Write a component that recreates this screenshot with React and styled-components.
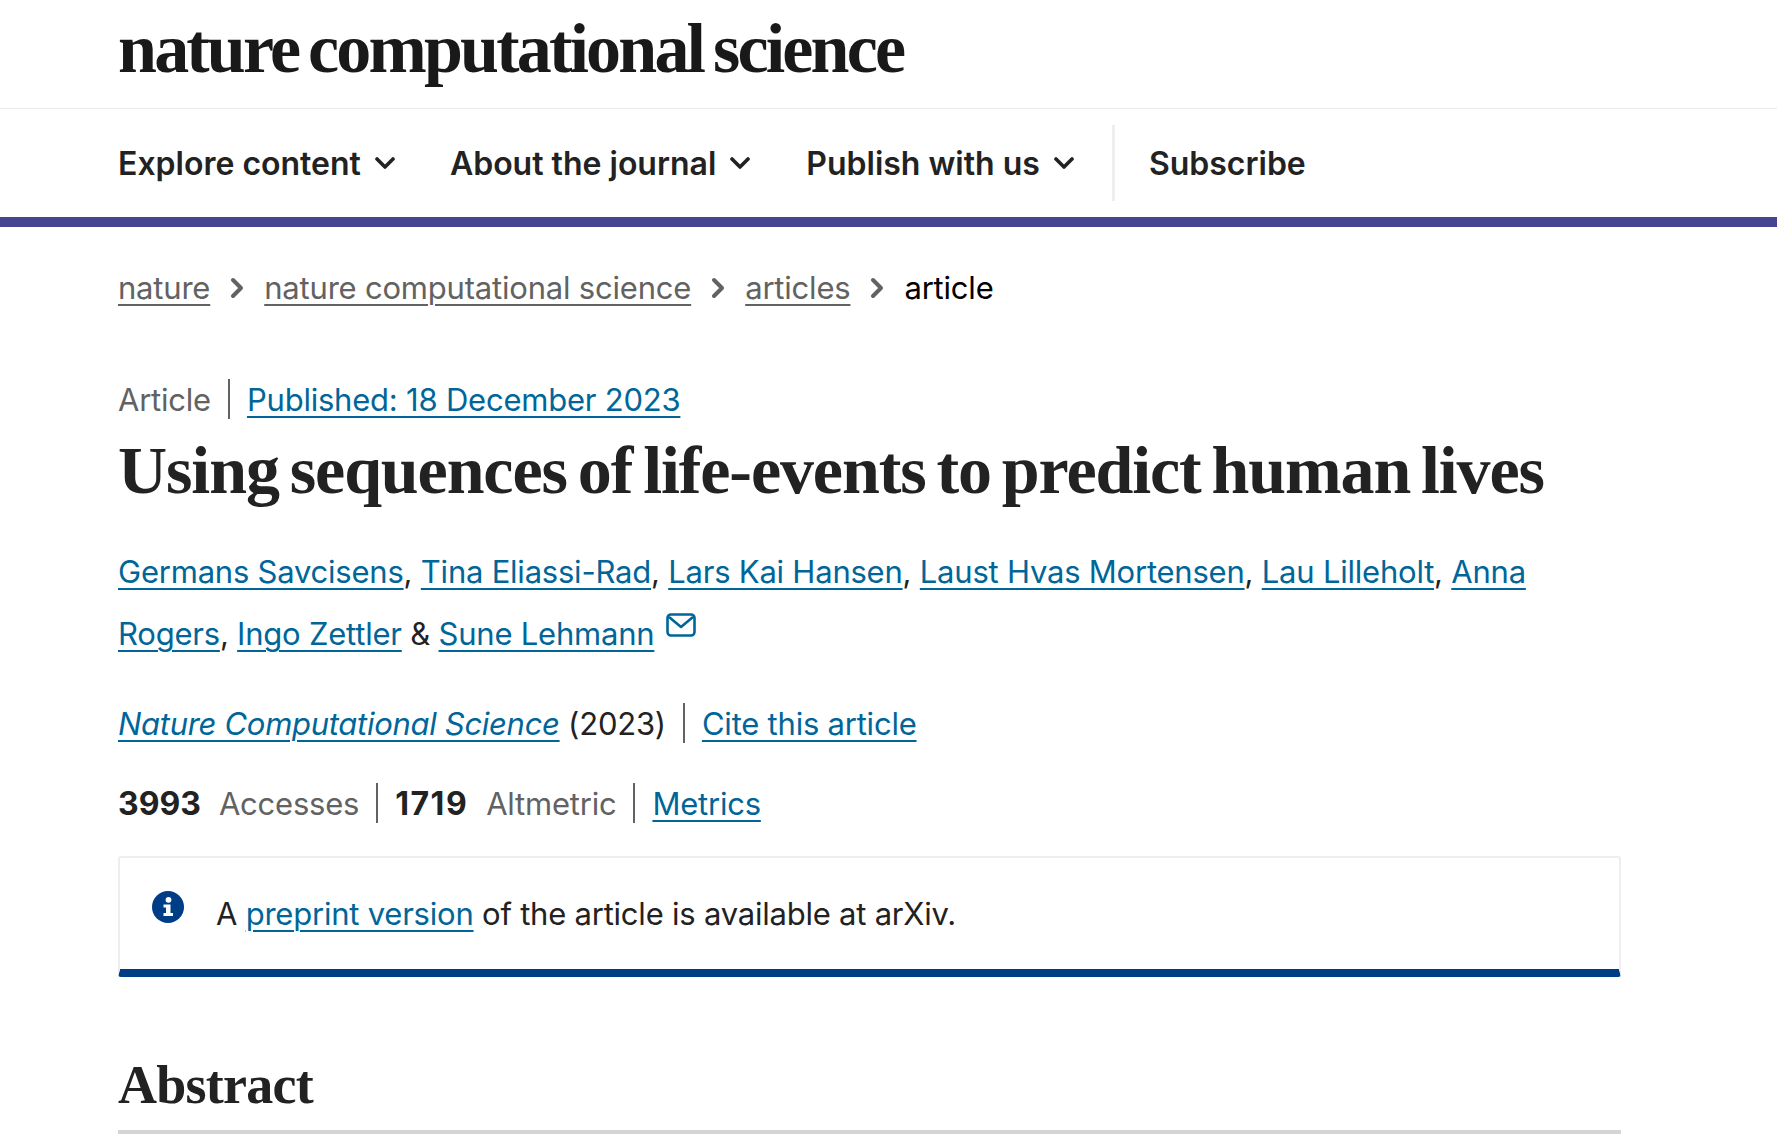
import styled, { createGlobalStyle } from "styled-components";

const GlobalStyle = createGlobalStyle`
  html, body {
    margin: 0;
    padding: 0;
    background: #fff;
    overflow: hidden;
  }
  body {
    font-family: Inter, "Liberation Sans", sans-serif;
    color: #222;
  }
`;

const authors = ["Germans Savcisens", "Tina Eliassi-Rad", "Lars Kai Hansen", "Laust Hvas Mortensen", "Lau Lilleholt"];

const Chevron = () => (
  <svg width="20" height="14" viewBox="0 0 20 14" fill="none">
    <path d="M2 3L10 11L18 3" stroke="#222" strokeWidth="3.6" strokeLinecap="round" strokeLinejoin="round" />
  </svg>
);

const CrumbArrow = () => (
  <svg width="14" height="22" viewBox="0 0 14 22" fill="none">
    <path d="M3 3L11 11L3 19" stroke="#626262" strokeWidth="4" strokeLinecap="round" strokeLinejoin="round" />
  </svg>
);

const App = () => {
  return (
    <>
      <GlobalStyle />
      <Masthead>
        <Logo>nature computational science</Logo>
      </Masthead>
      <Nav>
        <NavItem>
          Explore content <Chevron />
        </NavItem>
        <NavItem>
          About the journal <Chevron />
        </NavItem>
        <NavItem>
          Publish with us <Chevron />
        </NavItem>
        <NavDivider />
        <NavItem>Subscribe</NavItem>
      </Nav>
      <Main>
        <Breadcrumbs>
          <CrumbLink href="#">nature</CrumbLink>
          <CrumbArrow />
          <CrumbLink href="#">nature computational science</CrumbLink>
          <CrumbArrow />
          <CrumbLink href="#">articles</CrumbLink>
          <CrumbArrow />
          <span>article</span>
        </Breadcrumbs>

        <MetaRow $top={72}>
          <Muted>Article</Muted>
          <Sep />
          <BlueLink href="#">Published: 18 December 2023</BlueLink>
        </MetaRow>

        <Title>Using sequences of life-events to predict human lives</Title>

        <Authors>
          {authors.map((name) => (
            <span key={name}>
              <BlueLink href="#">{name}</BlueLink>,{" "}
            </span>
          ))}
          <BlueLink href="#">Anna Rogers</BlueLink>, <BlueLink href="#">Ingo Zettler</BlueLink> &amp;{" "}
          <BlueLink href="#">Sune Lehmann</BlueLink>
          <Envelope width="30" height="24" viewBox="0 0 30 24" fill="none">
            <rect x="1.5" y="1.5" width="27" height="21" rx="3.5" stroke="#069" strokeWidth="2.6" />
            <path d="M3 4L15 14L27 4" stroke="#069" strokeWidth="2.6" strokeLinejoin="round" />
          </Envelope>
        </Authors>

        <MetaRow $top={38}>
          <JournalLink href="#">Nature Computational Science</JournalLink>
          <Plain>&nbsp;(2023)</Plain>
          <Sep />
          <BlueLink href="#">Cite this article</BlueLink>
        </MetaRow>

        <MetaRow $top={40}>
          <Count>3993</Count>
          <Muted>Accesses</Muted>
          <Sep />
          <Count $spacing={1.5}>1719</Count>
          <Muted>Altmetric</Muted>
          <Sep />
          <BlueLink href="#">Metrics</BlueLink>
        </MetaRow>

        <Notice>
          <InfoIcon width="32" height="32" viewBox="0 0 32 32">
            <circle cx="16" cy="16" r="16" fill="#003d87" />
            <circle cx="16.5" cy="8.8" r="2.9" fill="#fff" />
            <path d="M11.5 13.5H18.5V22H21V25H11.5V22H14V16.5H11.5Z" fill="#fff" />
          </InfoIcon>
          <NoticeText>
            A <BlueLink href="#">preprint version</BlueLink> of the article is available at arXiv.
          </NoticeText>
        </Notice>

        <SectionTitle>Abstract</SectionTitle>
      </Main>
    </>
  );
};

export default App;

const Masthead = styled.header`
  height: 108px;
  padding-left: 118px;
  border-bottom: 1px solid #eaeaea;
  overflow: hidden;
`;

const Logo = styled.div`
  font-family: "Liberation Serif", serif;
  font-weight: 700;
  font-size: 70px;
  line-height: 98px;
  letter-spacing: -2.8px;
  word-spacing: -5px;
  color: #191919;
`;

const Nav = styled.nav`
  height: 108px;
  padding-left: 118px;
  display: flex;
  align-items: center;
  border-bottom: 10px solid #454590;
`;

const NavItem = styled.div`
  display: flex;
  align-items: center;
  gap: 14px;
  margin-right: 55px;
  font-size: 32px;
  font-weight: 600;
  color: #222;
  white-space: nowrap;
  &:nth-child(2) {
    margin-right: 56px;
  }
  &:nth-last-child(3) {
    margin-right: 38px;
  }
  &:last-child {
    margin-right: 0;
  }
`;

const NavDivider = styled.div`
  width: 3px;
  height: 76px;
  margin-right: 34px;
  background: #eeeeee;
`;

const Main = styled.main`
  width: 1503px;
  margin-left: 118px;
  font-size: 31px;
  letter-spacing: -0.22px;
`;

const Breadcrumbs = styled.div`
  display: flex;
  align-items: center;
  gap: 20px;
  padding-top: 42px;
  height: 38px;
  line-height: 38px;
  letter-spacing: -0.2px;
  color: #000;
`;

const CrumbLink = styled.a`
  color: #626262;
  text-decoration: underline;
  text-decoration-thickness: 2px;
  text-underline-offset: 5px;
`;

const MetaRow = styled.div`
  display: flex;
  align-items: center;
  height: 40px;
  margin-top: ${(p) => p.$top}px;
`;

const Sep = styled.span`
  width: 2px;
  height: 40px;
  margin: 0 17px;
  background: #626262;
`;

const Muted = styled.span`
  color: #626262;
`;

const Plain = styled.span`
  color: #222;
`;

const BlueLink = styled.a`
  color: #069;
  text-decoration: underline;
  text-decoration-thickness: 2px;
  text-underline-offset: 5px;
`;

const JournalLink = styled(BlueLink)`
  font-style: italic;
  letter-spacing: -0.3px;
`;

const Title = styled.h1`
  margin: 16px 0 0;
  font-family: "Liberation Serif", serif;
  font-weight: 700;
  font-size: 68px;
  line-height: 70px;
  letter-spacing: -1.1px;
  word-spacing: -5px;
  color: #222;
  white-space: nowrap;
`;

const Authors = styled.div`
  margin-top: 36px;
  line-height: 62px;
  color: #222;
`;

const Envelope = styled.svg`
  margin-left: 12px;
  vertical-align: 8px;
`;

const Count = styled.strong`
  font-size: 32px;
  font-weight: 700;
  letter-spacing: ${(p) => p.$spacing || 0}px;
  margin-right: 18px;
  color: #222;
`;

const Notice = styled.div`
  box-sizing: border-box;
  display: flex;
  align-items: flex-start;
  height: 121px;
  margin-top: 33px;
  padding: 33px 0 0 32px;
  border: 2px solid #eeeeee;
  border-bottom: 8px solid #003d87;
  border-radius: 3px;
`;

const InfoIcon = styled.svg`
  flex: none;
`;

const NoticeText = styled.div`
  margin-left: 32px;
  padding-top: 3px;
  line-height: 40px;
  color: #222;
`;

const SectionTitle = styled.h2`
  margin: 76px 0 0;
  height: 77px;
  box-sizing: content-box;
  font-family: "Liberation Serif", serif;
  font-weight: 700;
  font-size: 54px;
  line-height: 64px;
  letter-spacing: -0.75px;
  color: #222;
  border-bottom: 4px solid #d5d5d5;
`;
